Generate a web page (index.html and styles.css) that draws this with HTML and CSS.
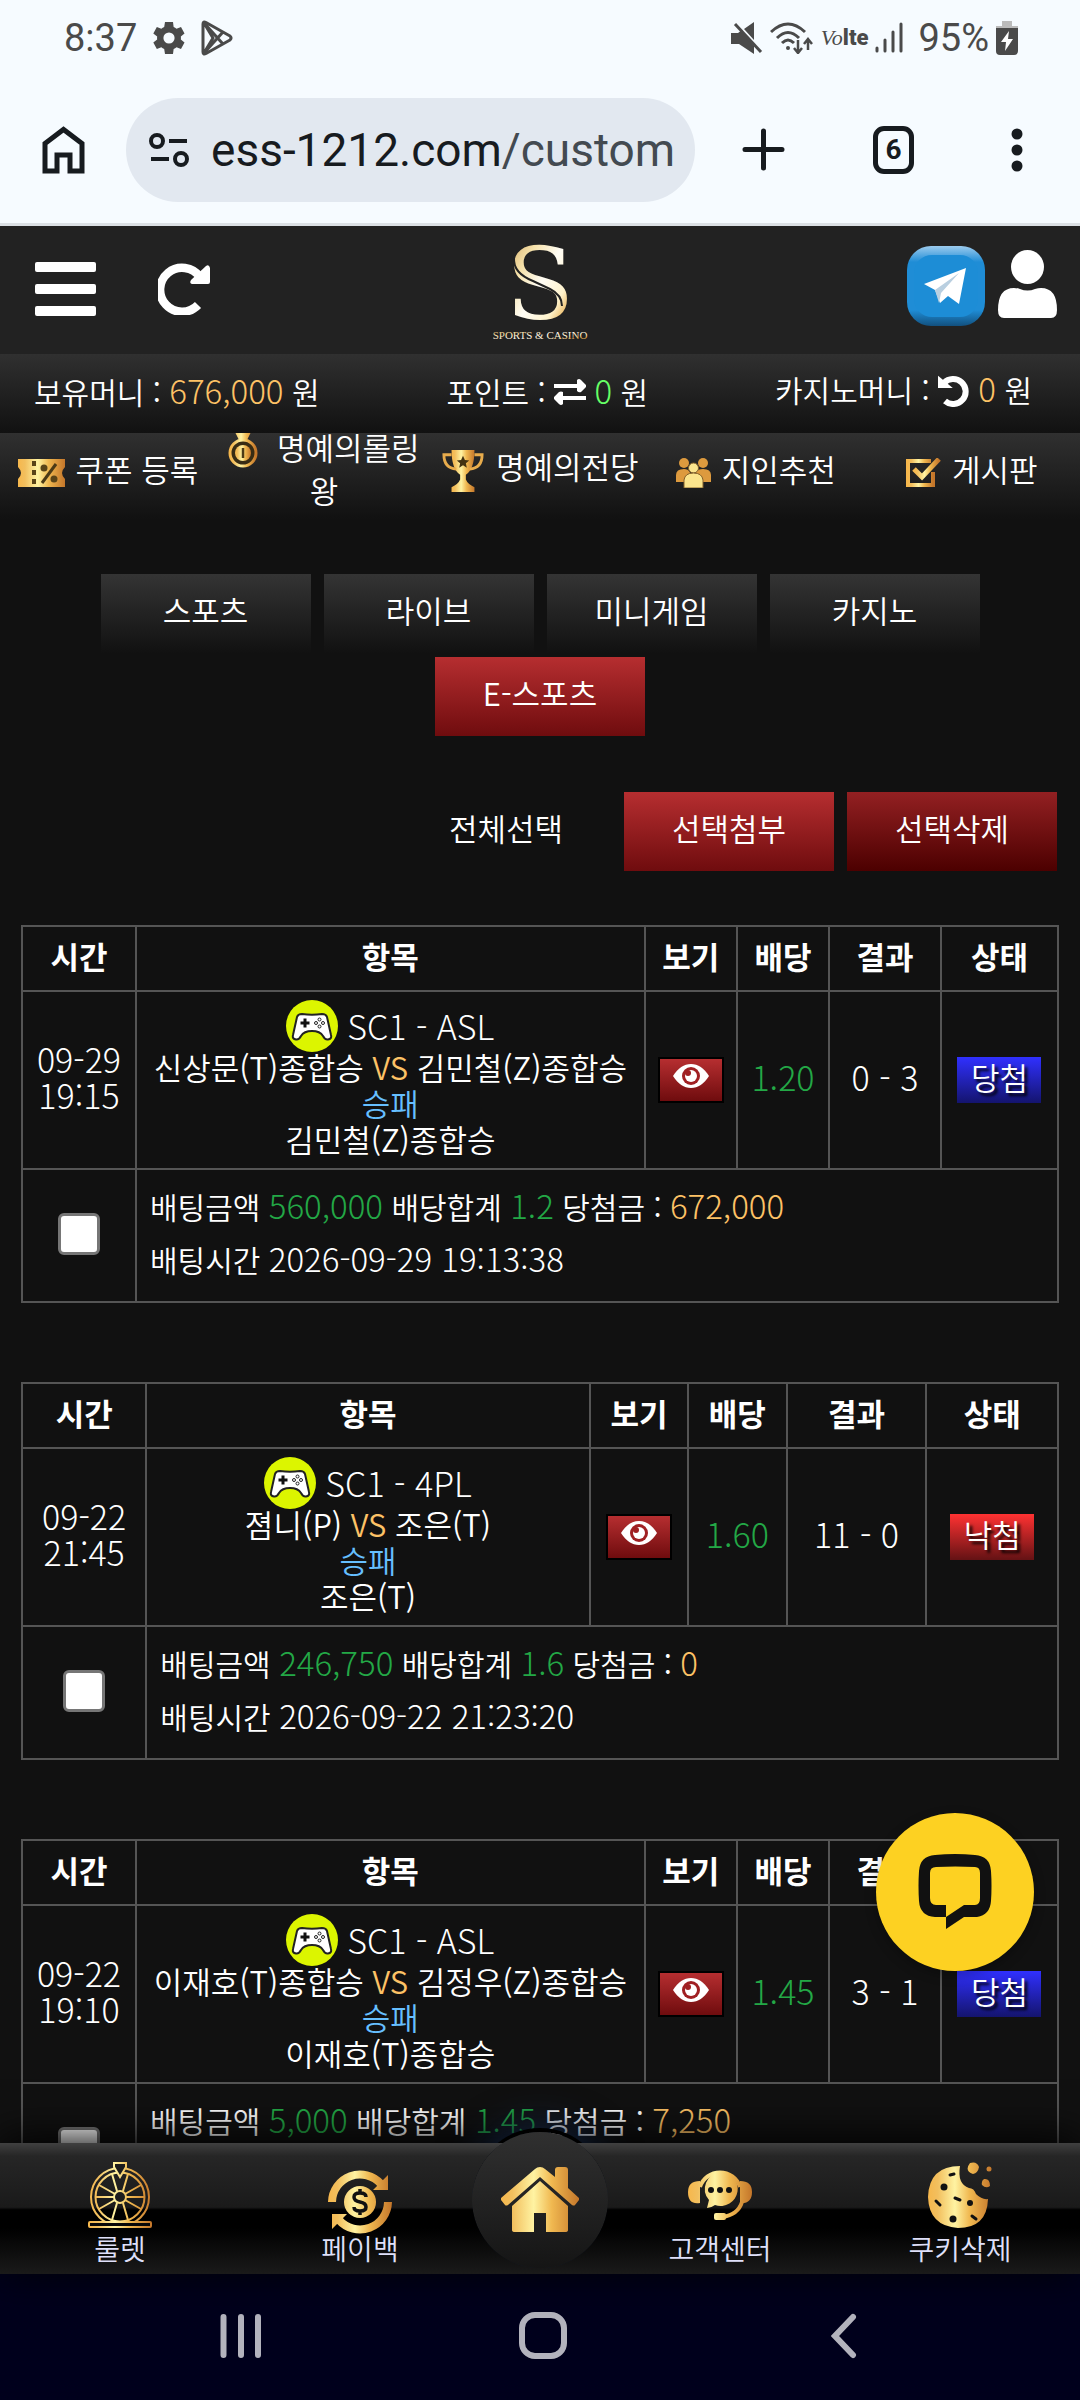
FILE: index.html
```html
<!DOCTYPE html>
<html lang="ko">
<head>
    <meta charset="utf-8">
    <meta name="viewport" content="width=device-width, initial-scale=1">
    <title>배팅내역</title>
    <link rel="stylesheet" href="styles.css">
</head>
<body>
    <!-- shared icons -->
    <svg class="sprite" aria-hidden="true">
        <defs>
            <linearGradient id="gold" x1="0" x2="1" y1="0" y2="0">
                <stop offset="0" stop-color="#f6b74c"/>
                <stop offset=".15" stop-color="#f2bf5e"/>
                <stop offset=".42" stop-color="#fff3a2"/>
                <stop offset=".65" stop-color="#f0b850"/>
                <stop offset="1" stop-color="#c4762a"/>
            </linearGradient>
            <linearGradient id="gold-user" gradientUnits="userSpaceOnUse" x1="0" x2="64" y1="0" y2="0">
                <stop offset="0" stop-color="#f6b74c"/>
                <stop offset=".15" stop-color="#f2bf5e"/>
                <stop offset=".42" stop-color="#fff3a2"/>
                <stop offset=".65" stop-color="#f0b850"/>
                <stop offset="1" stop-color="#c4762a"/>
            </linearGradient>
            <linearGradient id="logo-gold" x1="0" x2="1" y1="0" y2="1">
                <stop offset="0" stop-color="#c99a50"/>
                <stop offset=".3" stop-color="#f6e2ab"/>
                <stop offset=".5" stop-color="#fffdf5"/>
                <stop offset=".7" stop-color="#fff3cc"/>
                <stop offset=".85" stop-color="#e3a23b"/>
                <stop offset="1" stop-color="#fff0c0"/>
            </linearGradient>
            <linearGradient id="tg" x1="0" x2="0" y1="0" y2="1">
                <stop offset="0" stop-color="#9ccbee"/>
                <stop offset=".2" stop-color="#1f8dd6"/>
                <stop offset=".8" stop-color="#1f8dd6"/>
                <stop offset="1" stop-color="#12507e"/>
            </linearGradient>
        </defs>
        <symbol id="pad" viewBox="0 0 52 52">
            <circle cx="26" cy="26" r="26" fill="#dcf500"/>
            <path d="M11 17q1-3 5-3 10 1.500 20 0 4 0 5 3l4 18q1 4-3 4.500-3 .5-5-3.500-3-5-11-5t-11 5q-2 4-5 3.500-4-.5-3-4.500z" fill="#fff" stroke="#222" stroke-width="2"/>
            <path d="M17.500 18.500h3v3h3v3h-3v3h-3v-3h-3v-3h3z" fill="#111"/>
            <g fill="#fff" stroke="#222"><circle cx="33.500" cy="19.500" r="1.500"/><circle cx="33.500" cy="26.500" r="1.500"/><circle cx="30" cy="23" r="1.500"/><circle cx="37" cy="23" r="1.500"/></g>
        </symbol>
        <symbol id="eye" viewBox="0 0 36 24">
            <path d="M0 12C5 4 11 0 18 0s13 4 18 12c-5 8-11 12-18 12S5 20 0 12z" fill="#fff"/>
            <circle cx="18" cy="12" r="9" fill="#a02023"/>
            <circle cx="18" cy="12" r="6" fill="#fff"/>
            <circle cx="15" cy="9" r="3" fill="#a02023"/>
        </symbol>
    </svg>

    <div class="statusbar">
        <div class="status-group">
            <span>8:37</span>
            <svg width="32" height="32" viewBox="2 2 20 20" fill="#4a4a4a"><path fill-rule="evenodd" d="M19.400 13a7.500 7.500 0 0 0 0-2l2.300-1.800-2.200-4-2.800 1a7.500 7.500 0 0 0-1.800-1L14.500 2h-5l-.5 3.200a7.500 7.500 0 0 0-1.800 1l-2.800-1-2.200 4L4.600 11a7.500 7.500 0 0 0 0 2l-2.400 1.800 2.200 4 2.800-1a7.500 7.500 0 0 0 1.800 1l.5 3.200h5l.4-3.200a7.500 7.500 0 0 0 1.800-1l2.800 1 2.200-4zM12 15.500a3.500 3.500 0 1 1 0-7 3.500 3.500 0 0 1 0 7z"/></svg>
            <svg width="32" height="36" viewBox="0 0 32 36" fill="none" stroke="#4a4a4a" stroke-width="3" stroke-linejoin="round"><path d="M2 4q0-3 3-1.500L29 16q2 2 0 4L5 33.500Q2 35 2 32zM3 3l19 21M3 33l19-21M3 3l9 15-9 15"/></svg>
        </div>
        <div class="status-group status-right">
            <svg width="32" height="32" viewBox="0 0 32 32" fill="#4a4a4a"><path d="M0 11h7l4-3 12 16v8L8 22H0zM13 7l10-7v18z"/><path d="M4 2l26 28" stroke="#4a4a4a" stroke-width="3"/></svg>
            <svg width="44" height="32" viewBox="0 0 44 32" fill="none" stroke="#4a4a4a" stroke-width="3"><path d="M1 10q17-16 34 0M7 16q11-11 22 0M12 21q6-6 12 0"/><circle cx="18" cy="26" r="2" fill="#4a4a4a" stroke="none"/><path d="M28 18v13M24 26l4 5 4-5M38 28V17M34 22l4-5 4 5" stroke-width="2.500"/></svg>
            <span class="volte"><i>Vo</i>lte</span>
            <svg width="28" height="32" viewBox="0 0 28 32" stroke="#4a4a4a" stroke-width="3" stroke-linecap="round"><path d="M2 26v3M10 18v11M18 10v19M26 2v27"/></svg>
            <span class="battery-text">95%</span>
            <svg width="22" height="34" viewBox="0 0 22 34"><path d="M6 0h10v5h6v4H0V5h6z" fill="#bbb"/><path d="M0 7h22v23q0 4-4 4H4q-4 0-4-4z" fill="#4a4a4a"/><path d="M13 10L5 21h5l-1 9 8-12h-5z" fill="#fff"/></svg>
        </div>
    </div>

    <div class="toolbar">
        <button class="icon-btn" aria-label="홈">
            <svg width="43" height="48" viewBox="0 0 43 48" fill="none" stroke="#171b1f" stroke-width="5"><path d="M3 17.500L21.500 3.500 40 17.500V45H28V29H15v16H3z"/></svg>
        </button>
        <div class="urlbar">
            <svg width="40" height="34" viewBox="0 0 40 34" fill="none" stroke="#171b1f" stroke-width="4"><circle cx="8" cy="8" r="6"/><circle cx="32" cy="26" r="6"/><path d="M20 8h18M2 26h18"/></svg>
            <a class="url" href="#">ess-1212.com<span>/custom</span></a>
        </div>
        <button class="icon-btn" aria-label="새 탭">
            <svg width="43" height="43" viewBox="0 0 43 43" stroke="#171b1f" stroke-width="5" stroke-linecap="round"><path d="M21.500 3v37M3 21.500h37"/></svg>
        </button>
        <button class="icon-btn tabs-btn" aria-label="탭">6</button>
        <button class="icon-btn" aria-label="메뉴">
            <svg width="12" height="44" viewBox="0 0 12 44" fill="#171b1f"><circle cx="6" cy="6" r="5.500"/><circle cx="6" cy="22" r="5.500"/><circle cx="6" cy="38" r="5.500"/></svg>
        </button>
    </div>

    <header class="site-header">
        <div class="header-side header-left">
            <button class="icon-btn" aria-label="메뉴 열기">
                <svg width="61" height="54" viewBox="0 0 61 54" fill="#fff"><rect width="61" height="10" rx="2"/><rect y="22" width="61" height="10" rx="2"/><rect y="44" width="61" height="10" rx="2"/></svg>
            </button>
            <button class="icon-btn" aria-label="새로고침">
                <svg width="52" height="52" viewBox="0 0 52 52"><path d="M40 42A22 22 0 1 1 42 14" fill="none" stroke="#fff" stroke-width="8.500"/><path d="M52 5v14q0 2-2 2H34q-3-1-1-4L48 3q3-2 4 2z" fill="#fff"/></svg>
            </button>
        </div>
        <a class="logo" href="#" aria-label="S Sports &amp; Casino">
            <svg width="100" height="104" viewBox="0 0 100 104">
                <text x="50" y="81" class="logo-s" text-anchor="middle" fill="url(#logo-gold)">S</text>
                <path d="M24 20q-1 15 19 23l17 8q12 6 12 17" fill="none" stroke="#222" stroke-width="2"/>
                <text x="50" y="101" class="logo-sub" text-anchor="middle" fill="url(#logo-gold)">SPORTS &amp; CASINO</text>
            </svg>
        </a>
        <div class="header-side header-right">
            <a href="#" aria-label="텔레그램">
                <svg width="78" height="80" viewBox="0 0 78 80"><rect width="78" height="80" rx="24" fill="url(#tg)"/><rect x="7" y="9" width="64" height="62" rx="18" fill="#1d8dd6"/><path d="M17 38l42-16-7 36-11-8-8 7-5-13z" fill="#fff"/><path d="M28 44l24-17-18 20-2 10z" fill="#b9cfe0"/></svg>
            </a>
            <a href="#" aria-label="내 정보">
                <svg width="59" height="72" viewBox="0 0 59 72" fill="#fff"><ellipse cx="29.500" cy="17" rx="16.500" ry="17"/><path d="M0 60q0-22 16-22 3 0 6 1 7.500 3 15 0 3-1 6-1 16 0 16 22 0 8-6 8H6q-6 0-6-8z"/></svg>
            </a>
        </div>
    </header>

    <div class="wallet">
        <div>보유머니 : <span class="num gold">676,000</span> 원</div>
        <div>포인트 :
            <svg class="wallet-icon" width="32" height="26" viewBox="0 0 32 26" fill="#fff"><path d="M0 5h23V1q2-2 4 0l5 5q1 1 0 2l-5 5q-2 1-4-1V9H0zM32 17H9v-4q-2-1-4 0l-5 5q-1 1 0 2l5 5q2 2 4 0v-4h23z"/></svg>
            <span class="num lime">0</span> 원</div>
        <div>카지노머니 :
            <svg class="wallet-icon" width="32" height="32" viewBox="0 0 32 32"><path d="M6 8a12.500 12.500 0 1 1 1 18" fill="none" stroke="#fff" stroke-width="6"/><path d="M0 2l12 10H0z" fill="#fff" stroke="#fff" stroke-width="2"/></svg>
            <span class="num gold">0</span> 원</div>
    </div>

    <nav class="quick">
        <a href="#"><svg width="47" height="28" viewBox="0 0 47 28"><path d="M0 0h47v8q-6 6 0 12v8H0v-8q6-6 0-12z" fill="url(#gold)"/><path d="M16 2v25" stroke="#5a4418" stroke-width="4" stroke-dasharray="5 4"/><path d="M38 5L24 24" stroke="#4b3a16" stroke-width="3"/><circle cx="26" cy="9" r="3.500" fill="#5a4418"/><circle cx="36" cy="20" r="3.500" fill="#5a4418"/></svg> 쿠폰 등록</a>
        <a href="#"><svg class="medal" width="38" height="44" viewBox="0 0 38 44"><path d="M3 0l8 16h8l8-16H17l-2 7-2-7z" fill="url(#gold)"/><circle cx="15" cy="29" r="13" fill="#382c14" stroke="url(#gold)" stroke-width="3"/><circle cx="15" cy="29" r="8" fill="url(#gold)"/><path d="M15 24v10" stroke="#4b3a16" stroke-width="2.500"/></svg> 명예의롤링왕</a>
        <a href="#"><svg width="44" height="42" viewBox="0 0 44 44"><path d="M10 0h24q0 20-9 26v5q2 5 9 8v5H10v-5q7-3 9-8v-5Q10 20 10 0z" fill="url(#gold)"/><path d="M10 5H2q0 14 13 15M34 5h8q0 14-13 15" fill="none" stroke="#e8ac4c" stroke-width="3"/><path d="M22 6l2 4.500 4.500.5-3.500 3 1 4.500-4-2.500-4 2.500 1-4.500-3.500-3 4.500-.5z" fill="#443311"/></svg> 명예의전당</a>
        <a href="#"><svg width="35" height="30" viewBox="0 0 35 30"><g fill="#dd9a3e"><circle cx="8" cy="5" r="5"/><circle cx="27" cy="5" r="5"/><path d="M0 24V17q0-6 8-6t7 13zM20 24V14q2-3 7-3 8 0 8 6v7z"/></g><g fill="#fbe58d" stroke="#83602b"><circle cx="17.500" cy="10" r="5"/><path d="M8 30v-8q1-7 9.500-7t9.500 7v8z"/></g></svg> 지인추천</a>
        <a href="#"><svg width="35" height="30" viewBox="0 0 35 30" fill="none" stroke="url(#gold)"><path d="M27 14v13H2V3h23" stroke-width="4"/><path d="M8 11l8 8L33 1" stroke-width="5"/></svg> 게시판</a>
    </nav>

    <main class="content">
        <div class="tabs">
            <button class="btn">스포츠</button>
            <button class="btn">라이브</button>
            <button class="btn">미니게임</button>
            <button class="btn">카지노</button>
            <button class="btn red">E-스포츠</button>
        </div>

        <div class="actions">
            <button class="btn plain">전체선택</button>
            <button class="btn red">선택첨부</button>
            <button class="btn dark-red">선택삭제</button>
        </div>

        <table class="bet">
            <colgroup><col class="c-time"><col><col class="c-view"><col class="c-odds"><col class="c-result"><col class="c-state"></colgroup>
            <thead>
                <tr><th>시간</th><th>항목</th><th>보기</th><th>배당</th><th>결과</th><th>상태</th></tr>
            </thead>
            <tbody>
                <tr>
                    <td class="num">09-29<br>19:15</td>
                    <td class="match">
                        <div class="league"><svg width="52" height="52"><use href="#pad"/></svg> SC1 - ASL</div>
                        신상문(T)종합승 <span class="gold">VS</span> 김민철(Z)종합승<br>
                        <span class="sky">승패</span><br>
                        김민철(Z)종합승
                    </td>
                    <td><button class="view" aria-label="보기"><svg width="36" height="24"><use href="#eye"/></svg></button></td>
                    <td class="num green">1.20</td>
                    <td class="num">0 - 3</td>
                    <td><span class="state win">당첨</span></td>
                </tr>
                <tr class="summary">
                    <td><input type="checkbox" aria-label="선택"></td>
                    <td class="detail" colspan="5">
                        배팅금액 <span class="num green">560,000</span> 배당합계 <span class="num green">1.2</span> 당첨금 : <span class="num gold">672,000</span><br>
                        배팅시간 <span class="num">2026-09-29 19:13:38</span>
                    </td>
                </tr>
            </tbody>
        </table>

        <table class="bet wide">
            <colgroup><col class="c-time"><col><col class="c-view"><col class="c-odds"><col class="c-result"><col class="c-state"></colgroup>
            <thead>
                <tr><th>시간</th><th>항목</th><th>보기</th><th>배당</th><th>결과</th><th>상태</th></tr>
            </thead>
            <tbody>
                <tr>
                    <td class="num">09-22<br>21:45</td>
                    <td class="match">
                        <div class="league"><svg width="52" height="52"><use href="#pad"/></svg> SC1 - 4PL</div>
                        졈니(P) <span class="gold">VS</span> 조은(T)<br>
                        <span class="sky">승패</span><br>
                        조은(T)
                    </td>
                    <td><button class="view" aria-label="보기"><svg width="36" height="24"><use href="#eye"/></svg></button></td>
                    <td class="num green">1.60</td>
                    <td class="num">11 - 0</td>
                    <td><span class="state lose">낙첨</span></td>
                </tr>
                <tr class="summary">
                    <td><input type="checkbox" aria-label="선택"></td>
                    <td class="detail" colspan="5">
                        배팅금액 <span class="num green">246,750</span> 배당합계 <span class="num green">1.6</span> 당첨금 : <span class="num gold">0</span><br>
                        배팅시간 <span class="num">2026-09-22 21:23:20</span>
                    </td>
                </tr>
            </tbody>
        </table>

        <table class="bet">
            <colgroup><col class="c-time"><col><col class="c-view"><col class="c-odds"><col class="c-result"><col class="c-state"></colgroup>
            <thead>
                <tr><th>시간</th><th>항목</th><th>보기</th><th>배당</th><th>결과</th><th>상태</th></tr>
            </thead>
            <tbody>
                <tr>
                    <td class="num">09-22<br>19:10</td>
                    <td class="match">
                        <div class="league"><svg width="52" height="52"><use href="#pad"/></svg> SC1 - ASL</div>
                        이재호(T)종합승 <span class="gold">VS</span> 김정우(Z)종합승<br>
                        <span class="sky">승패</span><br>
                        이재호(T)종합승
                    </td>
                    <td><button class="view" aria-label="보기"><svg width="36" height="24"><use href="#eye"/></svg></button></td>
                    <td class="num green">1.45</td>
                    <td class="num">3 - 1</td>
                    <td><span class="state win">당첨</span></td>
                </tr>
                <tr class="summary">
                    <td><input type="checkbox" aria-label="선택"></td>
                    <td class="detail" colspan="5">
                        배팅금액 <span class="num green">5,000</span> 배당합계 <span class="num green">1.45</span> 당첨금 : <span class="num gold">7,250</span>
                    </td>
                </tr>
            </tbody>
        </table>
    </main>

    <button class="chat" aria-label="채팅 상담">
        <svg width="74" height="76" viewBox="0 0 74 76"><path fill-rule="evenodd" fill="#111" d="M17 1q20-2 40 0 15 1 16 16 1 15 0 30-1 14-14 16H46L28 75V63H17Q2 62 1 47q-1-15 0-30Q2 2 17 1zm1 12q-6 0-6 6v25q0 7 6 7h10v12l18-12h11q5 0 5-7V19q0-6-5-6-20-1-39 0z"/></svg>
    </button>

    <footer class="bottom-nav">
        <a href="#">
            <svg width="64" height="66" viewBox="0 0 64 66" fill="none" stroke="url(#gold-user)" stroke-width="2"><circle cx="32" cy="35" r="29"/><circle cx="32" cy="35" r="24.500"/><circle cx="32" cy="35" r="6"/><path d="M38 35h18M26 35H8M37 32l16-9M37 38l16 9M27 32l-16-9M27 38l-16 9M35 29l5-17M35 41l5 17M29 29l-5-17M29 41l-5 17"/><path d="M26 1h12v4l-6 10-6-10z" fill="#1c1c1c"/><rect x="1" y="60" width="62" height="5" rx="1" fill="#080808"/></svg>
            룰렛
        </a>
        <a href="#">
            <svg class="payback" width="64" height="66" viewBox="0 -7 64 66"><g fill="none" stroke="url(#gold-user)" stroke-width="8"><path d="M4 33A28 28 0 0 1 53 15M60 33A28 28 0 0 1 11 51"/></g><path d="M60 6v15H45zM4 60V45h15z" fill="url(#gold-user)"/><circle cx="32" cy="33" r="16" fill="url(#gold-user)"/><path d="M38 28q0-4-6-4t-6 4 6 5 6 5-6 4-6-4M32 20v4M32 42v4" fill="none" stroke="#111" stroke-width="3.500"/></svg>
            페이백
        </a>
        <a class="home" href="#" aria-label="홈">
            <svg width="78" height="66" viewBox="0 0 78 66" fill="url(#gold)"><path d="M39 0q3 0 5 2l10 8V3q0-3 3-3h7q3 0 3 3v18l11 10q1 1 0 2l-4 5q-1 1-3 0L39 10 7 38q-2 1-3 0l-4-5q-1-1 0-2L34 2q2-2 5-2z M39 14l28 25v24q0 2-3 2H45V46H33v19H14q-3 0-3-2V39z"/></svg>
        </a>
        <a href="#">
            <svg width="64" height="66" viewBox="0 0 64 66"><path d="M12 25a21 21 0 0 1 40 0M54 40q-4 13-20 15" fill="none" stroke="url(#gold-user)" stroke-width="4"/><path d="M12 19v22Q0 43 0 30q0-11 12-11zM52 19v22q12 1 12-11 0-11-12-11z" fill="url(#gold-user)"/><rect x="26" y="51" width="12" height="7" rx="2" fill="url(#gold-user)"/><path d="M32 10a17 17 0 1 1-5 33q-4 3-8 3l2-8A17 17 0 0 1 32 10z" fill="url(#gold-user)"/><g fill="#111"><circle cx="23" cy="28" r="3"/><circle cx="32" cy="28" r="3"/><circle cx="41" cy="28" r="3"/></g></svg>
            고객센터
        </a>
        <a href="#">
            <svg width="64" height="66" viewBox="0 0 64 66" fill="url(#gold-user)"><path d="M32 4q-3 18 9 22 5 0 7 6 6 6 12 5-1 29-30 29Q1 64 0 35 1 4 32 4z"/><path d="M42 1q7-2 9 4-1 6-6 7-9-3-3-11zM56 17q6-1 6 7-4 3-8-1-1-4 2-6z"/><circle cx="61" cy="7" r="2.500"/><g fill="#111"><circle cx="16" cy="25" r="3.500"/><circle cx="42" cy="41" r="3"/><circle cx="25" cy="57" r="3.500"/></g><path d="M22 13l4-1M27 36l5 2M8 39l4 4M44 54l4 3" stroke="#111" stroke-width="3" stroke-linecap="round"/></svg>
            쿠키삭제
        </a>
    </footer>

    <div class="sysbar">
        <button class="icon-btn" aria-label="최근 앱"><svg width="42" height="46" viewBox="0 0 42 46" stroke="#b3b3bd" stroke-width="6" stroke-linecap="round"><path d="M3.500 4v38M21 4v38M38 4v38"/></svg></button>
        <button class="icon-btn" aria-label="홈 화면"><svg width="56" height="48" viewBox="0 0 56 48"><rect x="3" y="3" width="42" height="41" rx="13" fill="none" stroke="#b3b3bd" stroke-width="6"/></svg></button>
        <button class="icon-btn" aria-label="뒤로"><svg width="26" height="46" viewBox="0 0 26 46" fill="none" stroke="#b3b3bd" stroke-width="6" stroke-linecap="round"><path d="M22 4L4 23l18 19"/></svg></button>
    </div>
</body>
</html>
```
FILE: styles.css
```css
* { box-sizing: border-box; }
body {
    margin: 0;
    height: 100vh;
    display: flex;
    flex-direction: column;
    overflow: hidden;
    background: #111;
    color: #fff;
    font-family: "Noto Sans CJK KR", sans-serif;
    font-size: 31px;
    font-weight: 350;
}
a { color: inherit; text-decoration: none; }
svg { flex: none; }
button { font: inherit; color: inherit; cursor: pointer; }
.sprite { position: absolute; width: 0; height: 0; }
.icon-btn { display: flex; padding: 0; border: 0; background: none; }

/* text colours */
.num { font-size: 34px; font-weight: 300; }
.gold { color: #fdc266; }
.lime { color: #66ff66; }
.green { color: #23a846; }
.sky { color: #66bfff; }

/* phone status bar */
.statusbar {
    display: flex;
    justify-content: space-between;
    align-items: center;
    height: 76px;
    padding: 0 62px 0 64px;
    background: #f6fbff;
    color: #4a4a4a;
    font-family: Roboto, sans-serif;
    font-size: 38px;
    font-weight: 400;
}
.status-group { display: flex; align-items: center; gap: 16px; }
.status-right { gap: 7px; }
.battery-text { margin-left: 8px; }
.volte { font-size: 22px; font-weight: 900; }
.volte i { font-family: "Liberation Serif", serif; font-weight: 400; }

/* browser toolbar */
.toolbar {
    display: flex;
    align-items: center;
    height: 150px;
    padding: 0 57px 0 42px;
    background: #f6fbff;
    border-bottom: 3px solid #dbe0e4;
    font-family: Roboto, sans-serif;
}
.urlbar {
    flex: 1;
    display: flex;
    align-items: center;
    gap: 22px;
    height: 104px;
    margin: 0 47px 0 41px;
    padding: 0 20px 0 23px;
    border-radius: 52px;
    background: #e2e8f0;
}
.url { flex: 1; overflow: hidden; white-space: nowrap; font-size: 46px; font-weight: 400; color: #171b1f; }
.url span { color: #434a51; }
.tabs-btn {
    justify-content: center;
    align-items: center;
    width: 48px;
    height: 48px;
    margin: 0 97px 0 88px;
    border: 5px solid #171b1f;
    border-radius: 11px;
    color: #171b1f;
    font-size: 28px;
    font-weight: 700;
}

/* site header */
.site-header {
    display: grid;
    grid-template-columns: 1fr auto 1fr;
    align-items: center;
    height: 128px;
    padding: 0 23px;
    background: #222;
}
.header-side { display: flex; align-items: center; }
.header-left { gap: 62px; padding: 0 0 2px 12px; }
.header-right { justify-content: flex-end; gap: 13px; padding-bottom: 9px; }
.header-right a, .logo { display: flex; }
.logo-s { font-family: "DejaVu Serif", serif; font-size: 100px; font-weight: 400; }
.logo-sub { font-family: "Liberation Serif", serif; font-size: 11px; font-weight: 400; }

.wallet {
    display: flex;
    justify-content: space-between;
    align-items: center;
    height: 79px;
    padding: 0 48px 6px 34px;
    background: linear-gradient(#303030, #111);
    font-size: 30px;
    line-height: 40px;
}
.wallet .num, .detail .num { font-size: 33px; }
.wallet-icon { vertical-align: middle; margin-bottom: 6px; }

.quick {
    display: grid;
    grid-template-columns: repeat(5, 1fr);
    grid-template-rows: 100%;
    align-items: center;
    height: 86px;
    padding-bottom: 16px;
    overflow: hidden;
    background: linear-gradient(#303030, #111);
    line-height: 43px;
    text-align: center;
}
.quick a { padding: 0 6px; }
.quick svg { margin-right: 2px; vertical-align: middle; }
.quick .medal { margin-top: -10px; }

/* list */
.content { flex: 1; min-height: 0; overflow: hidden; padding: 55px 21px 0; }
.tabs { display: flex; flex-wrap: wrap; justify-content: center; gap: 4px 13px; padding: 0 75px; }
.actions { display: flex; justify-content: flex-end; gap: 13px; margin: 56px 2px 54px; }
.btn {
    width: 210px;
    height: 79px;
    padding: 0 0 8px;
    border: 0;
    background: linear-gradient(#343434, #111);
}
.btn.red { background: linear-gradient(#b62e30, #6f0c0e); }
.btn.dark-red { background: linear-gradient(#932022, #4c0000); }
.btn.plain { background: none; }

.bet {
    width: 100%;
    margin-bottom: 79px;
    table-layout: fixed;
    border-collapse: collapse;
    line-height: 36px;
    text-align: center;
}
.bet th, .bet td { padding: 8px 0; border: 2px solid #555; }
.bet th { height: 65px; padding-bottom: 14px; font-weight: 700; }
.bet td.num { padding-bottom: 14px; }
.bet td.match { padding-bottom: 11px; }
.c-time { width: 11%; }
.c-view, .c-odds { width: 8.9%; }
.c-result { width: 10.8%; }
.c-state { width: 11.3%; }
.wide .c-time { width: 12%; }
.wide .c-view, .wide .c-odds { width: 9.5%; }
.wide .c-result { width: 13.5%; }
.wide .c-state { width: 12.7%; }
.league { display: flex; justify-content: center; align-items: center; gap: 9px; height: 52px; margin-bottom: -3px; font-size: 34px; font-weight: 300; }

.view {
    display: inline-flex;
    justify-content: center;
    width: 66px;
    height: 46px;
    padding: 5px 0;
    border: 2px solid #000;
    background: linear-gradient(#b62e30, #6f0c0e);
    vertical-align: middle;
}
.state {
    display: inline-block;
    width: 84px;
    height: 46px;
    line-height: 40px;
    text-shadow: 3px 3px 3px #000;
    vertical-align: middle;
}
.win { background: linear-gradient(#3030ff, #14146e); }
.lose { background: linear-gradient(#ff3232, #641214); }

.bet .summary td { height: 133px; padding-bottom: 12px; line-height: 52px; }
.bet .summary .detail { padding: 9px 13px; font-size: 30px; text-align: left; vertical-align: top; }
.bet input {
    appearance: none;
    display: block;
    width: 42px;
    height: 42px;
    margin: 0 auto;
    border: 3px solid #767676;
    border-radius: 6px;
    background: #fff;
}

/* floating chat button */
.chat {
    position: fixed;
    right: 46px;
    bottom: 429px;
    z-index: 3;
    display: flex;
    justify-content: center;
    align-items: center;
    width: 158px;
    height: 158px;
    border: 0;
    border-radius: 50%;
    background: #fdd122;
    box-shadow: 0 4px 12px rgba(0, 0, 0, .3);
}

/* bottom menu */
.bottom-nav {
    position: relative;
    z-index: 2;
    display: grid;
    grid-template-columns: 2fr 2fr 1fr 2fr 2fr;
    height: 131px;
    background: linear-gradient(#404040 0, #262626 10%, #1a1a1a 49%, #000 51%, #000 65%, #1a1a1a);
    box-shadow: 0 -4px 40px #000;
    color: #dfe0fa;
    font-size: 28px;
    line-height: 40px;
}
.bottom-nav a {
    display: flex;
    flex-direction: column;
    align-items: center;
    padding-top: 19px;
}
.bottom-nav .payback { overflow: visible; }
.bottom-nav .home {
    place-self: start center;
    justify-content: center;
    width: 136px;
    height: 136px;
    margin: -11px -8px 0;
    padding: 0;
    border-radius: 50%;
    background: linear-gradient(#303030, #151515);
    box-shadow: 0 -5px 0 -1px #000, 0 -4px 40px rgba(22, 50, 100, .6);
    /* keeps the glow above the bar only */
    clip-path: path("M-50 -50H186V11H105A68 68 0 1 1 31 11H-50Z");
}

.sysbar {
    display: flex;
    justify-content: space-between;
    align-items: center;
    height: 126px;
    padding: 0 223px 2px 220px;
    background: #00001c;
}
```
